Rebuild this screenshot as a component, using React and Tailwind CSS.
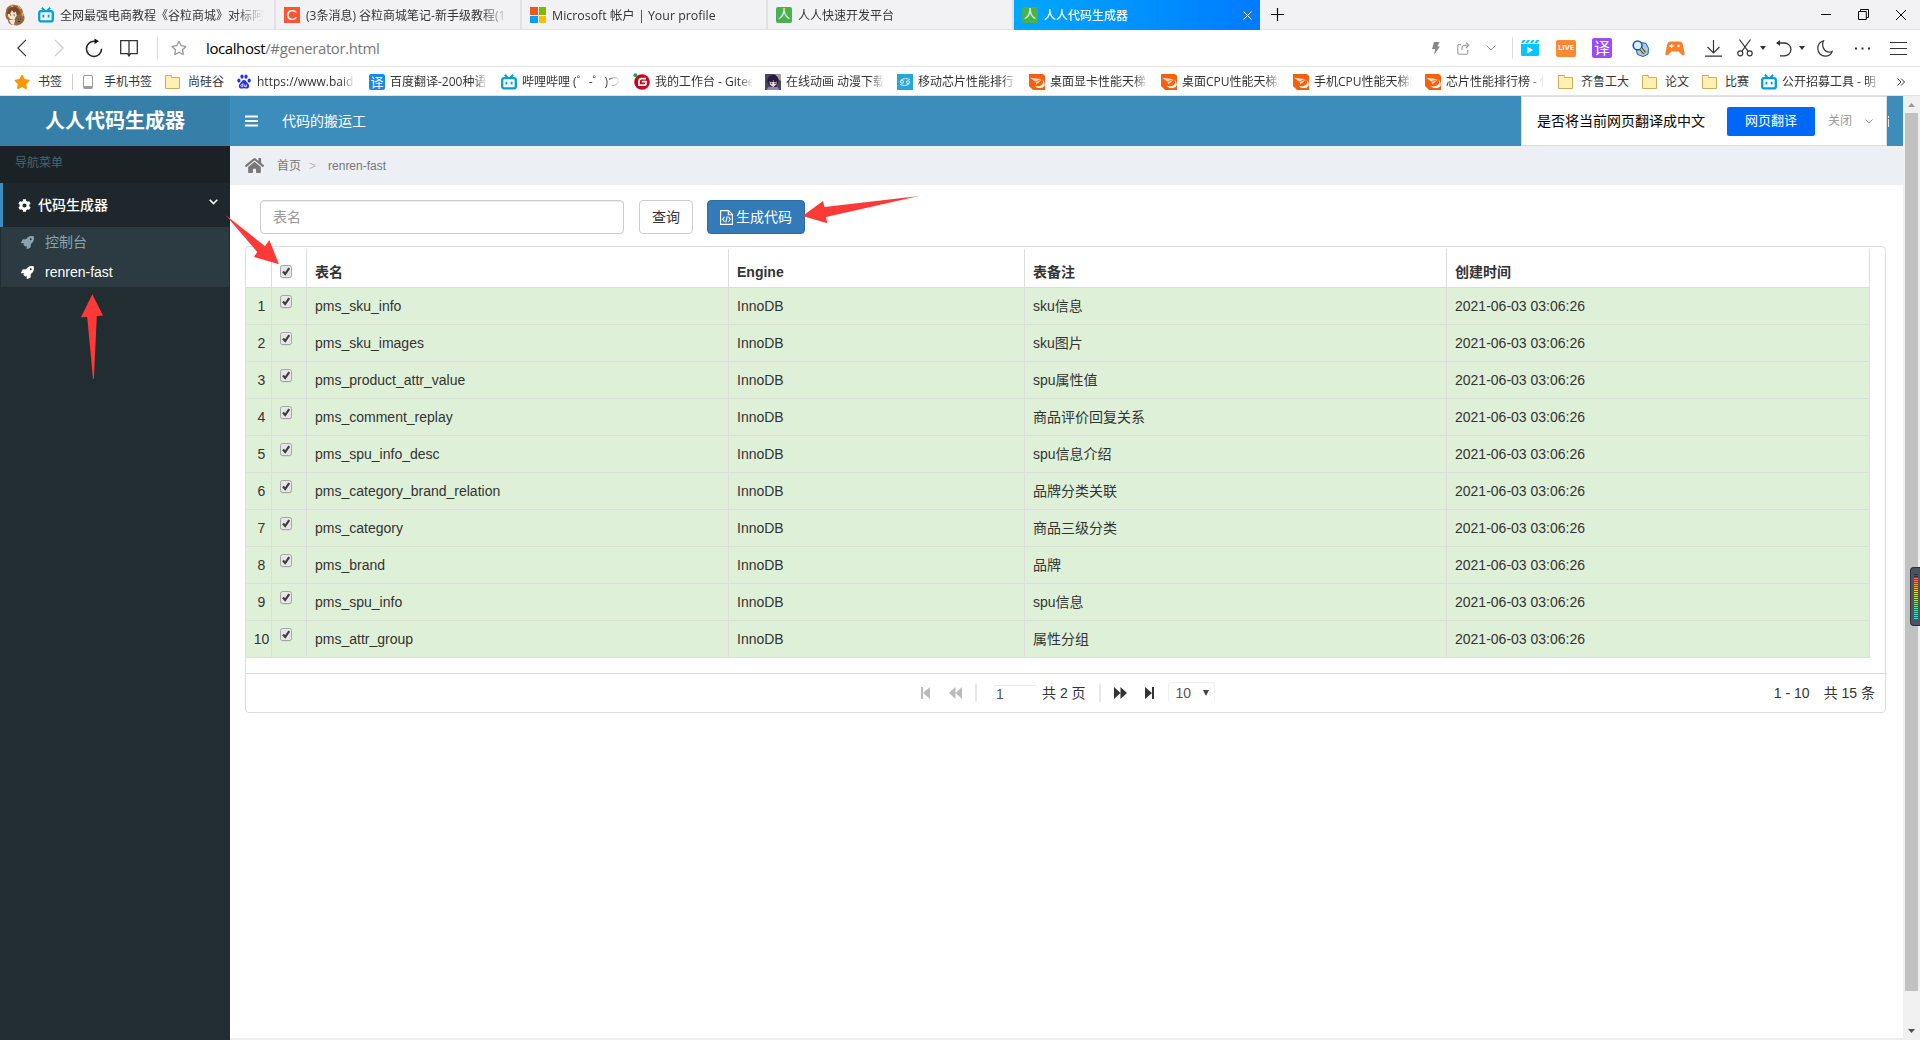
import React from 'react';
import { FaCog, FaRocket, FaHome, FaStar, FaRegStar } from 'react-icons/fa';

const cjk = "font-['Open_Sans','Noto_Sans_CJK_SC',sans-serif]";
const body = "font-['Liberation_Sans','Noto_Sans_CJK_SC',sans-serif]";
const fade = 'whitespace-nowrap overflow-hidden [mask-image:linear-gradient(to_right,#000_86%,transparent)]';

const Bili = () => (
  <svg width="16" height="16" viewBox="0 0 16 16" fill="none" stroke="#00a1d6" className="shrink-0">
    <rect x="1.2" y="4.2" width="13.6" height="10.2" rx="2" strokeWidth="2.3" />
    <path d="M3.800.8l2.600 2.600M12.200.8L9.600 3.400" strokeWidth="2" />
    <path d="M5.400 7.800v2.600M10.600 7.800v2.600" strokeWidth="1.800" />
  </svg>
);
const Folder = () => (
  <svg width="15" height="14" viewBox="0 0 15 14" className="shrink-0">
    <path d="M.5.5h5.800v2h8.200v11H.5z" fill="#fff0b3" stroke="#cdae55" />
  </svg>
);
const Orange = () => (
  <svg width="16" height="16" viewBox="0 0 16 16" className="shrink-0">
    <rect width="16" height="16" fill="#f4600c" />
    <path d="M1 3.800l12.500 1.400-6.200 5.300-.8-2.800z" fill="#ffd9c2" />
    <path d="M6.500 7.700L13.500 5.200" stroke="#f4600c" strokeWidth=".8" />
    <path d="M13.300 5.500c2.700 4-1.600 8-7.300 6.500 1.600 2.600 6.500 2.800 9 .4 1.400-1.700.5-5.400-1.700-6.900z" fill="#fff" />
    <path d="M0 12l4 4H0zM16 0h-2l2 2z" fill="#fff" />
  </svg>
);
const Ren = () => (
  <span className="flex h-4 w-4 shrink-0 items-center justify-center rounded-xs bg-[#4caf50] text-xs leading-4 text-white">人</span>
);
const Yi = () => (
  <span className="flex h-4 w-4 shrink-0 items-center justify-center rounded-xs bg-[#1c86f5] text-[13px] leading-4 text-white">译</span>
);
const Paw = () => (
  <svg width="14" height="15" viewBox="0 0 14 15" fill="#2932e1" className="shrink-0">
    <ellipse cx="1.900" cy="6.600" rx="1.600" ry="2.100" />
    <ellipse cx="5" cy="2.600" rx="1.600" ry="2.200" />
    <ellipse cx="9" cy="2.600" rx="1.600" ry="2.200" />
    <ellipse cx="12.200" cy="6.600" rx="1.600" ry="2.100" />
    <path d="M7 6c2 0 2.400 2 4 3.400 1.800 1.700 1.500 4.900-1 5.200-1.200.1-1.800-.3-3-.3s-1.800.4-3 .3c-2.500-.3-2.800-3.500-1-5.200C4.600 8 5 6 7 6z" />
    <path d="M5.900 9.300v3.300H4.700a.9.900 0 0 1 0-1.900h1.200M7.700 10.500v2.100h1.700v-2.100" fill="none" stroke="#fff" strokeWidth=".8" />
  </svg>
);
const Gitee = () => (
  <svg width="17" height="17" viewBox="0 0 17 17" className="shrink-0">
    <circle cx="9" cy="9" r="7.800" fill="#d0021b" />
    <path d="M13 5.600H8.600A2.600 2.600 0 0 0 6 8.200v4h5a2 2 0 0 0 2-2V8.700H8.800" fill="none" stroke="#fff" strokeWidth="1.800" />
    <circle cx="2.400" cy="2.200" r="1.900" fill="#21a14b" />
  </svg>
);
const Anime = () => (
  <svg width="16" height="16" viewBox="0 0 16 16" className="shrink-0">
    <rect width="16" height="16" fill="#4a4560" />
    <path d="M10 0h6v7l-3-2z" fill="#a99f96" />
    <path d="M2 16c0-3 3-4 6-4s6 1 6 4z" fill="#8d89a6" />
    <path d="M2.500 9c-1-5 2-8 6-8s6 4 4.500 8l-2 4-6-.5z" fill="#231f38" />
    <path d="M4.500 7.500c2-1.500 5-1.500 7 0v2.700L8.400 13l-3.500-2.300z" fill="#efd8cf" />
    <path d="M4.500 7.800L7 4l1.500 4L10 5l1.500 3" fill="#231f38" />
    <path d="M5.600 9.200h1.600M9.300 9.200h1.600" stroke="#5c45a8" strokeWidth="1.500" />
  </svg>
);
const Chip = () => (
  <svg width="16" height="16" viewBox="0 0 16 16" className="shrink-0">
    <rect width="16" height="16" fill="#27a5de" />
    <g fill="none" stroke="#e6f6ff" strokeWidth="1">
      <path d="M3.400 7.400c1-3 6.500-3.600 9.400-1.800M12.600 8.600c-1 3-6.500 3.600-9.400 1.800" />
      <circle cx="5" cy="7.800" r="1.500" /><circle cx="11" cy="8.200" r="1.500" />
    </g>
  </svg>
);
const Avatar = () => (
  <svg width="22" height="22" viewBox="0 0 22 22">
    <path d="M2 7c0-4 5-7 9-6 5 0 8 4 8 8 2 3 2 7 0 9-2 3-6 4-9 3-4 0-6-2-6-5C1 14 1 10 2 7z" fill="#a06a3c" />
    <path d="M4 9l3-3 5 2 1 5-3 3-4-1-2-3z" fill="#f6e3cf" />
    <path d="M3 10c0-4 2-6 5-7 4-1 8 2 8 7l-3 1-1-4-2 2-2-3-2 4z" fill="#7a4826" />
    <path d="M6 1l3 2M14 2l3 3M18 9l1 3" stroke="#d8b07c" strokeWidth="1.300" />
    <circle cx="15" cy="15.500" r="4" fill="#8a6648" />
    <path d="M13.500 15h1M16 15h1M14 17.500h2" stroke="#4b2a18" />
    <path d="M5 16l2 4 3 1 1-5z" fill="#efe6df" />
    <path d="M6 11h1.200M9.500 11h1.400" stroke="#5b3418" />
  </svg>
);
const CIcon = () => (
  <span className="flex h-4 w-4 shrink-0 items-center justify-center bg-[#fc5531] font-['Liberation_Sans',sans-serif] text-[15px] leading-4 text-white">C</span>
);
const MS = () => (
  <span className="grid h-4 w-4 shrink-0 grid-cols-2 gap-px">
    <i className="bg-[#f65314]" /><i className="bg-[#7cbb00]" /><i className="bg-[#00a1f1]" /><i className="bg-[#ffbb00]" />
  </span>
);

function Tab({ icon, label, active }) {
  return (
    <div className={active
      ? 'flex h-[30px] w-[246px] items-center bg-linear-to-r from-[#00a8ff] to-[#007aff] pl-2 text-white'
      : 'flex h-[30px] w-[246px] items-center border-r-2 border-b border-[#e2e2e4] pt-px pl-2'}>
      {icon}
      <span className={`ml-1.5 w-[204px] pt-0.5 text-xs ${active ? 'font-medium' : ''} ${fade}`}>{label}</span>
      {active && (
        <svg width="9" height="9" viewBox="0 0 9 9" stroke="#fff" className="mr-2 shrink-0"><path d="M.5.5l8 8M8.500.5l-8 8" /></svg>
      )}
    </div>
  );
}

function TabStrip() {
  return (
    <div className="flex h-[30px] items-center bg-[#f2f2f4] text-[#333]">
      <div className="flex h-[30px] w-[30px] items-center justify-center border-b border-[#e2e2e4]"><Avatar /></div>
      <Tab icon={<Bili />} label="全网最强电商教程《谷粒商城》对标阿" />
      <Tab icon={<CIcon />} label="(3条消息) 谷粒商城笔记-新手级教程(1" />
      <Tab icon={<MS />} label={<span className="text-[12.4px]">Microsoft 帐户 | Your profile</span>} />
      <Tab icon={<Ren />} label="人人快速开发平台" />
      <Tab icon={<Ren />} label="人人代码生成器" active />
      <div className="flex h-[30px] flex-1 items-center justify-between border-b border-[#e2e2e4] pr-3.5 pl-[11px] text-black">
        <svg width="13" height="13" viewBox="0 0 13 13" stroke="currentColor" strokeWidth="1.200"><path d="M6.500 0v13M0 6.500h13" /></svg>
        <div className="flex items-center gap-[27px]">
          <svg width="10" height="11" viewBox="0 0 10 11" stroke="currentColor"><path d="M0 5.500h10" /></svg>
          <svg width="11" height="11" viewBox="0 0 11 11" stroke="currentColor" fill="none"><path d="M.5 2.500h7.800v8H.5zM2.500 2.500v-2h8v8H8.300" /></svg>
          <svg width="10" height="10" viewBox="0 0 10 10" stroke="currentColor"><path d="M0 0l10 10M10 0L0 10" /></svg>
        </div>
      </div>
    </div>
  );
}

const Box = ({ w, children }) => <span className={`flex h-9 shrink-0 items-center justify-center ${w}`}>{children}</span>;
const Caret = () => <svg width="6" height="4" viewBox="0 0 6 4"><path d="M0 0h6L3 4z" fill="#333" /></svg>;

function Toolbar() {
  return (
    <div className="flex h-[37px] items-center border-b border-[#e2e2e4] bg-white text-[#333]">
      <Box w="w-[43px]"><svg width="10" height="18" viewBox="0 0 10 18" fill="none" stroke="#333" strokeWidth="1.200"><path d="M9 .8L.8 9 9 17.200" /></svg></Box>
      <Box w="w-[31px]"><svg width="10" height="18" viewBox="0 0 10 18" fill="none" stroke="#ccc" strokeWidth="1.200"><path d="M1 .8L9.200 9 1 17.200" /></svg></Box>
      <Box w="w-[40px]">
        <svg width="18" height="20" viewBox="0 0 18 20" fill="none" stroke="#222" strokeWidth="1.500"><path d="M11 3.200H9a7.600 7.600 0 1 0 7.600 7.600" /><path d="M9.500.5v5.500L14 3.200z" fill="#111" stroke="none" /></svg>
      </Box>
      <Box w="w-[30px]">
        <svg width="18" height="17" viewBox="0 0 18 17" fill="none" stroke="#333" strokeWidth="1.300"><path d="M.7.7h16.600v13H10.500L9 16l-1.500-2.300H.7zM9 .7V15" /></svg>
      </Box>
      <Box w="w-[27px]"><i className="h-[22px] w-px bg-[#ddd]" /></Box>
      <Box w="w-4"><FaRegStar size={16} color="#999" /></Box>
      <span className="ml-[19px] flex-1 text-[15px] leading-5 tracking-[-0.4px] text-[#777]"><span className="text-black">localhost</span>/#generator.html</span>
      <Box w="w-[39px]"><svg width="8" height="13" viewBox="0 0 8 13" fill="#888"><path d="M2 0h5.500L5.500 4.500H8L2 13l1.200-6H0z" /></svg></Box>
      <Box w="w-[17px]">
        <svg width="13" height="13" viewBox="0 0 13 13" fill="none" stroke="#999" strokeWidth="1.100"><path d="M4 2.500H2A1.200 1.200 0 0 0 .8 3.700v7.300A1.200 1.200 0 0 0 2 12.200h7.500a1.200 1.200 0 0 0 1.200-1.200V8M9 .6l2.800 2.700L9 6M11.500 3.300H8a3 3 0 0 0-3 3V8" /></svg>
      </Box>
      <Box w="w-[37px]"><svg width="10" height="6" viewBox="0 0 10 6" fill="none" stroke="#999"><path d="M.5.5L5 5 9.500.5" /></svg></Box>
      <Box w="w-[6px]"><i className="h-[22px] w-px bg-[#ddd]" /></Box>
      <Box w="w-[30px] mr-1">
        <svg width="18" height="16" viewBox="0 0 18 16"><path d="M0 4h18v10.500a1.500 1.500 0 0 1-1.500 1.500h-15A1.500 1.500 0 0 1 0 14.500z" fill="#00c8ff" /><path d="M0 3L2 0h2.500l-2 3zM4.500 3l2-3H9L7 3zM9 3l2-3h2.500l-2 3zM13.500 3l2-3H18v.5L16.300 3z" fill="#00c8ff" /><path d="M6.500 6.500v7L12 10z" fill="#fff" /></svg>
      </Box>
      <Box w="w-[34px]"><span className="flex h-[17px] w-5 items-center justify-center rounded-xs bg-[#ff8833] text-[7.5px] font-bold text-white">LIVE</span></Box>
      <Box w="w-[38px]"><span className="flex h-5 w-5 items-center justify-center rounded-xs bg-[#9a4cf8] text-base leading-5 text-white">译</span></Box>
      <Box w="w-[38px]">
        <svg width="17" height="17" viewBox="0 0 17 17">
          <path d="M8 2.500l6 .8 2.500 5-.5 6-5 2.200-5.500-2L4 9z" fill="#a9c8ee" stroke="#1f5fa8" />
          <circle cx="5.600" cy="5.400" r="4.400" fill="#d9f0ff" stroke="#1d55a0" strokeWidth="1.600" />
          <path d="M8.800 8.600l3.800 4.600" stroke="#1a2b4a" strokeWidth="3.400" />
          <path d="M8.800 8.600l3.600 4.400" stroke="#f6c33a" strokeWidth="1.800" />
        </svg>
      </Box>
      <Box w="w-[32px]">
        <svg width="20" height="15" viewBox="0 0 20 15"><path d="M5.500.5h9c2 0 3 1.500 3.500 3.500l1.600 8.500c.3 1.800-1.700 2.600-2.900 1.300L13.500 10.500h-7l-3.200 3.300c-1.200 1.300-3.200.5-2.900-1.300L2 4C2.500 2 3.500.5 5.500.5z" fill="#ff7f27" /><path d="M6.500 3v4M4.500 5h4" stroke="#fff" strokeWidth="1.300" /><circle cx="13.500" cy="5" r="1.300" fill="#fff" /></svg>
      </Box>
      <Box w="w-[44px]"><svg width="17" height="17" viewBox="0 0 17 17" fill="none" stroke="#333" strokeWidth="1.200"><path d="M8.500 0v13M2.500 7l6 6 6-6M0 16.200h17" /></svg></Box>
      <Box w="w-[20px]">
        <svg width="16" height="18" viewBox="0 0 16 18" fill="none" stroke="#333" strokeWidth="1.200"><path d="M2.500.5l8.700 11.800M13.500.5L4.800 12.300" /><circle cx="3.300" cy="14.300" r="2.500" /><circle cx="12.700" cy="14.300" r="2.500" /></svg>
      </Box>
      <Box w="w-[16px]"><Caret /></Box>
      <Box w="w-[26px]">
        <svg width="16" height="17" viewBox="0 0 16 17" fill="none" stroke="#333" strokeWidth="1.300"><path d="M1 3h7.500a6.300 6.300 0 0 1 0 12.800H4" /><path d="M4 0v6L0 3z" fill="#333" stroke="none" /></svg>
      </Box>
      <Box w="w-[10px]"><Caret /></Box>
      <Box w="w-[36px] mr-[5px]"><svg width="16" height="17" viewBox="0 0 16 17" fill="none" stroke="#333" strokeWidth="1.200"><path d="M6.500.8C3 2 .8 5 .8 8.500c0 4.500 3.300 7.700 7.400 7.700 3.200 0 5.900-1.700 7-4.700-1.200.6-2.200.7-3.200.7C7.500 12 4 6 6.500.8z" /></svg></Box>
      <Box w="w-[28px]"><svg width="15" height="3" viewBox="0 0 15 3" fill="#333"><path d="M0 .5h2v2H0zM6.500.5h2v2h-2zM13 .5h2v2h-2z" /></svg></Box>
      <Box w="w-[44px]"><svg width="17" height="13" viewBox="0 0 17 13" stroke="#333"><path d="M0 .5h17M0 6.500h17M0 12.500h17" /></svg></Box>
    </div>
  );
}

const links = [
  [<Yi />, '百度翻译-200种语'],
  [<Bili />, '哔哩哔哩 (゜-゜)つ'],
  [<Gitee />, '我的工作台 - Gitee'],
  [<Anime />, '在线动画 动漫下载'],
  [<Chip />, '移动芯片性能排行榜'],
  [<Orange />, '桌面显卡性能天梯图'],
  [<Orange />, '桌面CPU性能天梯图'],
  [<Orange />, '手机CPU性能天梯图'],
  [<Orange />, '芯片性能排行榜 - 快'],
];

function Bookmarks() {
  return (
    <div className="flex h-[29px] items-center border-b border-[#e2e2e4] bg-white pt-px pl-3.5 text-xs whitespace-nowrap text-[#333]">
      <FaStar size={16} color="#ff9500" />
      <span className="ml-2 w-6">书签</span>
      <i className="mx-2.5 h-4 w-px bg-[#ccc]" />
      <span className="h-[14px] w-2.5 rounded-xs border-[1.5px] border-b-[3px] border-[#999]" />
      <span className="ml-[11px] w-12">手机书签</span>
      <span className="ml-[13px] flex w-[60px] items-center gap-2"><Folder />尚硅谷</span>
      <span className="ml-[12px] flex w-[132px] items-center gap-1.5"><Paw /><span className={`w-[98px] ${fade}`}>https://www.baid</span></span>
      {links.map(([icon, label], i) => (
        <span key={i} className="flex w-[132px] shrink-0 items-center gap-[5px]">
          {icon}
          <span className={`w-[98px] ${fade}`}>{label}</span>
        </span>
      ))}
      <span className="ml-px flex w-[84px] items-center gap-2"><Folder />齐鲁工大</span>
      <span className="flex w-[60px] items-center gap-2"><Folder />论文</span>
      <span className="flex w-[59px] items-center gap-2"><Folder />比赛</span>
      <span className="flex items-center gap-[5px]"><Bili /><span className={`w-[98px] ${fade}`}>公开招募工具 - 明</span></span>
      <svg width="8" height="8" viewBox="0 0 8 8" fill="none" stroke="#333" className="ml-[17px]"><path d="M.5.5L4 4 .5 7.500M4 .5L7.500 4 4 7.500" /></svg>
    </div>
  );
}

function TranslateBar() {
  return (
    <>
      <div className="ml-auto flex h-[50px] w-[366px] items-center border border-[#dcdcdc] bg-white pl-[15px] text-sm text-black">
        是否将当前网页翻译成中文
        <button className="ml-[22px] flex h-[29px] w-[88px] items-center justify-center rounded-xs bg-[#0068f8] text-[13px] text-white">网页翻译</button>
        <span className="ml-[13px] text-xs text-[#999]">关闭</span>
        <svg width="8" height="5" viewBox="0 0 8 5" fill="none" stroke="#999" className="ml-[13px]"><path d="M.5.5L4 4 7.500.5" /></svg>
      </div>
      <span className="flex w-4 flex-col gap-px pl-px"><i className="h-0.5 w-px bg-white/80" /><i className="h-2 w-px bg-white/80" /></span>
    </>
  );
}

function Sidebar() {
  return (
    <aside className="w-[230px] shrink-0 bg-[#222d32] text-sm">
      <div className="flex h-[50px] items-center justify-center bg-[#367fa9] text-xl font-bold text-white">人人代码生成器</div>
      <div className="flex h-[37px] items-center bg-[#1a2226] pb-1 pl-[15px] text-xs text-[#4b646f]">导航菜单</div>
      <div className="flex h-11 items-center border-l-[3px] border-[#3c8dbc] bg-[#1e282c] pl-[15px] font-medium text-white">
        <FaCog size={13} />
        <span className="ml-[7px] flex-1">代码生成器</span>
        <svg width="9" height="6" viewBox="0 0 9 6" fill="none" stroke="#fff" strokeWidth="1.600" className="mr-3 mb-1.5"><path d="M.7.7l3.800 3.800L8.300.7" /></svg>
      </div>
      <div className="mx-px h-[60px] bg-[#2c3b41]">
        <div className="flex h-[30px] items-center pl-5 text-[#8aa4af]"><FaRocket size={13} /><span className="ml-[11px]">控制台</span></div>
        <div className="flex h-[30px] items-center pl-5 text-white"><FaRocket size={13} /><span className="ml-[11px]">renren-fast</span></div>
      </div>
    </aside>
  );
}

const Check = () => (
  <svg width="12" height="14" viewBox="0 0 12 14" className="shrink-0">
    <rect x=".5" y="1.500" width="11" height="12" rx="2" fill="#999" opacity=".35" />
    <rect x=".5" y=".5" width="11" height="12" rx="2" fill="#e6e6e6" stroke="#a5a5a5" />
    <path d="M3 6.500l2.200 2.500L9.200 3.200" fill="none" stroke="#3c3c3c" strokeWidth="2.200" />
  </svg>
);

const rows = [
  ['pms_sku_info', 'sku信息'],
  ['pms_sku_images', 'sku图片'],
  ['pms_product_attr_value', 'spu属性值'],
  ['pms_comment_replay', '商品评价回复关系'],
  ['pms_spu_info_desc', 'spu信息介绍'],
  ['pms_category_brand_relation', '品牌分类关联'],
  ['pms_category', '商品三级分类'],
  ['pms_brand', '品牌'],
  ['pms_spu_info', 'spu信息'],
  ['pms_attr_group', '属性分组'],
];
const cols = 'grid w-[1624px] grid-cols-[26px_35px_422px_296px_422px_423px]';
const cell = 'flex items-center border-r border-b border-[#ddd] pl-2';

function Grid() {
  return (
    <div className="h-[467px] w-[1641px] rounded-sm border border-[#ddd] text-sm text-[#333]">
      <div className={`${cols} mt-0.5 h-[39px] font-bold`}>
        <div className={cell} />
        <div className={`${cell} pt-2`}><Check /></div>
        {['表名', 'Engine', '表备注', '创建时间'].map((h) => <div key={h} className={`${cell} pt-[7px]`}>{h}</div>)}
      </div>
      {rows.map(([name, note], i) => (
        <div key={name} className={`${cols} h-[37px] bg-[#dff0d8]`}>
          <div className="flex items-center justify-center border-r border-b border-[#ddd] pl-[6px]">{i + 1}</div>
          <div className={`${cell} pb-2`}><Check /></div>
          <div className={cell}>{name}</div>
          <div className={cell}>InnoDB</div>
          <div className={cell}>{note}</div>
          <div className={cell}>2021-06-03 03:06:26</div>
        </div>
      ))}
      <div className="mt-[15px] flex h-[39px] w-[1641px] items-center border-t border-[#ddd]">
        <div className="flex w-[1100px] items-center pl-[675px]">
          <svg width="9" height="12" viewBox="0 0 9 12" fill="#bbb"><path d="M0 0h2v12H0zM9 0v12L2 6z" /></svg>
          <svg width="13" height="12" viewBox="0 0 13 12" fill="#bbb" className="ml-[19px]"><path d="M6.500 0v12L0 6zM13 0v12L6.500 6z" /></svg>
          <i className="ml-[13px] h-[18px] w-0.5 bg-[#e8e8e8]" />
          <span className="ml-4 flex h-4 w-[45px] items-center rounded-t-sm border-t border-[#e8e8e8] pl-[3px] text-[#555]">1</span>
          <span className="ml-[4px]">共 2 页</span>
          <i className="ml-[13px] h-[18px] w-0.5 bg-[#e8e8e8]" />
          <svg width="13" height="12" viewBox="0 0 13 12" fill="#333" className="ml-[13px]"><path d="M6.500 0v12L13 6zM0 0v12L6.500 6z" /></svg>
          <svg width="9" height="12" viewBox="0 0 9 12" fill="#333" className="ml-[18px]"><path d="M7 0h2v12H7zM0 0v12L7 6z" /></svg>
          <span className="mb-px ml-[14px] flex h-[21px] w-[47px] items-center rounded-sm border-x border-t border-[#f0f0f0] pr-[5px] pb-px pl-[7px] text-[#555]">
            <span className="flex-1">10</span>
            <svg width="6" height="6" viewBox="0 0 6 6"><path d="M0 0h6L3 6z" fill="#444" /></svg>
          </span>
        </div>
        <span className="mr-3 ml-auto flex gap-[14px]"><span>1 - 10</span><span>共 15 条</span></span>
      </div>
    </div>
  );
}

function Arrows() {
  return (
    <svg width="1920" height="1040" viewBox="0 0 1920 1040" fill="#fe3a38" className="pointer-events-none absolute top-0 left-0">
      <path d="M92.300 294.300L103 315.600 96.800 316 93.900 379H93L87.200 317 81 317.300z" />
      <path d="M225.500 215L265 246.200 269.300 240 279 264.200 254 257 257.200 252z" />
      <path d="M802.500 216L823 201 824.500 207 919 196 826 217 827.300 223.300z" />
    </svg>
  );
}

const meterColors = ['#333', '#333', '#f66', '#f77a5a', '#f98a4a', '#f99a45', '#f5ac42', '#f3bd40', '#f0ca3f', '#e9d740', '#dfe045', '#d0e24c', '#c0e255', '#aee15e', '#9de268', '#8ce274', '#79e281', '#6be290', '#5ce2a0', '#54e0b0', '#4fdcc0', '#4cd8d0', '#4cd8d0'];

function Meter() {
  return (
    <div className="absolute top-[567px] right-0 flex h-[59px] w-2.5 flex-col items-center gap-px rounded-l border border-r-0 border-[#2a2d35] bg-[#4d5363] pt-1.5">
      {meterColors.map((c, i) => <i key={i} className="h-px w-1 shrink-0" style={{ background: c }} />)}
    </div>
  );
}

export default function App() {
  return (
    <div className={`relative flex h-[1040px] w-[1920px] flex-col overflow-hidden bg-white ${cjk}`}>
      <TabStrip />
      <Toolbar />
      <Bookmarks />
      <div className={`flex flex-1 ${body}`}>
        <Sidebar />
        <main className="flex w-[1673px] flex-col border-b-2 border-[#eee]">
          <header className="flex h-[50px] items-center bg-[#3c8dbc] text-white">
            <svg width="13" height="12" viewBox="0 0 13 12" stroke="#fff" strokeWidth="2" className="ml-[15px]"><path d="M0 1.500h13M0 6h13M0 10.500h13" /></svg>
            <span className="ml-6 text-sm">代码的搬运工</span>
            <TranslateBar />
          </header>
          <nav className="flex h-[39px] items-center bg-[#ecf0f5] pl-[15px] text-xs text-[#777]">
            <FaHome size={19} />
            <span className="ml-[13px]">首页</span>
            <span className="ml-2 text-[#bbb]">&gt;</span>
            <span className="ml-3">renren-fast</span>
          </nav>
          <section className="pl-[15px]">
            <div className="flex gap-[14px] pt-[15px] pb-3 pl-[15px] text-sm text-[#333]">
              <div className="flex h-[34px] w-[364px] items-center rounded border border-[#ccc] pl-3 text-[#999] shadow-[inset_0_1px_1px_rgba(0,0,0,0.075)]">表名</div>
              <button className="ml-px h-[34px] w-[54px] rounded border border-[#ccc]">查询</button>
              <button className="flex h-[34px] w-[98px] items-center justify-center gap-[3px] rounded border border-[#2e6da4] bg-[#337ab7] text-white">
                <svg width="13" height="15" viewBox="0 0 13 15" fill="none" stroke="#fff" strokeWidth="1.100"><path d="M.6.6h8l3.800 3.800v10H.6zM8.300.8v4h4M4.500 6.800L2.700 9.300l1.800 2.500M8.500 6.800l1.800 2.500-1.800 2.500M7.200 6.300L5.800 12.300" /></svg>
                生成代码
              </button>
            </div>
            <Grid />
          </section>
        </main>
        <div className="flex w-[17px] flex-col items-center bg-[#f0f0f0] pt-[7px]">
          <svg width="7" height="4" viewBox="0 0 7 4"><path d="M0 4h7L3.500 0z" fill="#999" /></svg>
          <div className="mt-1.5 h-[878px] w-[13px] bg-[#c1c1c1]" />
          <svg width="7" height="4" viewBox="0 0 7 4" className="mt-[38px]"><path d="M0 0h7L3.500 4z" fill="#505050" /></svg>
        </div>
      </div>
      <Arrows />
      <Meter />
    </div>
  );
}
